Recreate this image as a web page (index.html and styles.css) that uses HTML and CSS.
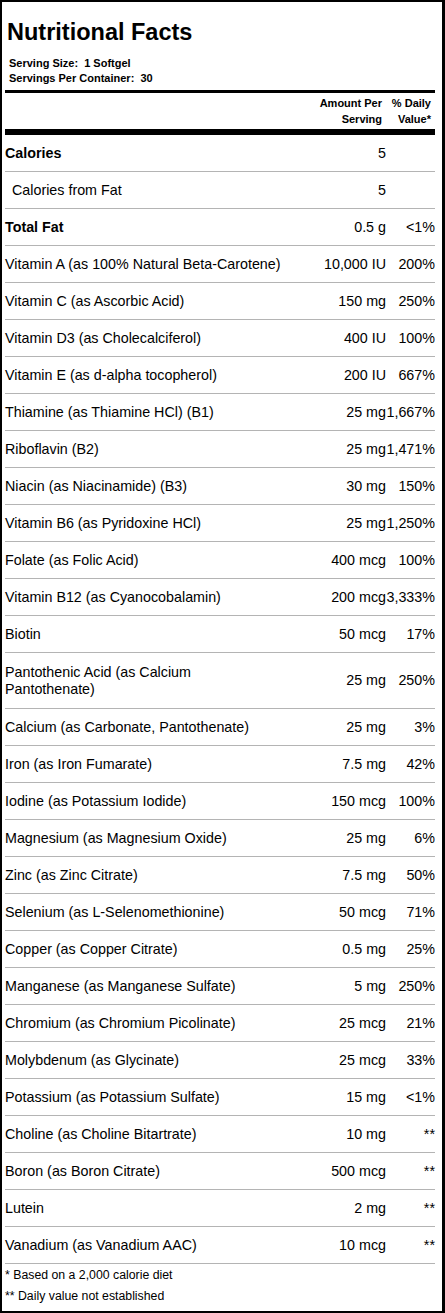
FILE: index.html
```html
<!DOCTYPE html>
<html lang="en">
<head>
  <meta charset="UTF-8">
  <meta name="viewport" content="width=device-width, initial-scale=1.0">
  <title>Nutritional Facts</title>
  <link rel="stylesheet" href="styles.css">
</head>
<body>
  <div class="label">
    <h1 class="label-title">Nutritional Facts</h1>
    <div class="serving">
      <p>Serving Size:&nbsp; 1 Softgel</p>
      <p>Servings Per Container:&nbsp; 30</p>
    </div>
    <div class="rule rule-mid"></div>

    <!-- column headings -->
    <div class="head">
      <span></span>
      <span>Amount Per<br>Serving</span>
      <span>% Daily<br>Value*</span>
    </div>
    <div class="rule rule-thick"></div>

    <div class="row bold"><span class="name">Calories</span><span class="amt">5</span><span class="dv"></span></div>
    <div class="row"><span class="name sub">Calories from Fat</span><span class="amt">5</span><span class="dv"></span></div>
    <div class="row bold"><span class="name">Total Fat</span><span class="amt">0.5 g</span><span class="dv">&lt;1%</span></div>
    <div class="row"><span class="name">Vitamin A (as 100% Natural Beta-Carotene)</span><span class="amt">10,000 IU</span><span class="dv">200%</span></div>
    <div class="row"><span class="name">Vitamin C (as Ascorbic Acid)</span><span class="amt">150 mg</span><span class="dv">250%</span></div>
    <div class="row"><span class="name">Vitamin D3 (as Cholecalciferol)</span><span class="amt">400 IU</span><span class="dv">100%</span></div>
    <div class="row"><span class="name">Vitamin E (as d-alpha tocopherol)</span><span class="amt">200 IU</span><span class="dv">667%</span></div>
    <div class="row"><span class="name">Thiamine (as Thiamine HCl) (B1)</span><span class="amt">25 mg</span><span class="dv">1,667%</span></div>
    <div class="row"><span class="name">Riboflavin (B2)</span><span class="amt">25 mg</span><span class="dv">1,471%</span></div>
    <div class="row"><span class="name">Niacin (as Niacinamide) (B3)</span><span class="amt">30 mg</span><span class="dv">150%</span></div>
    <div class="row"><span class="name">Vitamin B6 (as Pyridoxine HCl)</span><span class="amt">25 mg</span><span class="dv">1,250%</span></div>
    <div class="row"><span class="name">Folate (as Folic Acid)</span><span class="amt">400 mcg</span><span class="dv">100%</span></div>
    <div class="row"><span class="name">Vitamin B12 (as Cyanocobalamin)</span><span class="amt">200 mcg</span><span class="dv">3,333%</span></div>
    <div class="row"><span class="name">Biotin</span><span class="amt">50 mcg</span><span class="dv">17%</span></div>
    <div class="row tall"><span class="name">Pantothenic Acid (as Calcium<br>Pantothenate)</span><span class="amt">25 mg</span><span class="dv">250%</span></div>
    <div class="row"><span class="name">Calcium (as Carbonate, Pantothenate)</span><span class="amt">25 mg</span><span class="dv">3%</span></div>
    <div class="row"><span class="name">Iron (as Iron Fumarate)</span><span class="amt">7.5 mg</span><span class="dv">42%</span></div>
    <div class="row"><span class="name">Iodine (as Potassium Iodide)</span><span class="amt">150 mcg</span><span class="dv">100%</span></div>
    <div class="row"><span class="name">Magnesium (as Magnesium Oxide)</span><span class="amt">25 mg</span><span class="dv">6%</span></div>
    <div class="row"><span class="name">Zinc (as Zinc Citrate)</span><span class="amt">7.5 mg</span><span class="dv">50%</span></div>
    <div class="row"><span class="name">Selenium (as L-Selenomethionine)</span><span class="amt">50 mcg</span><span class="dv">71%</span></div>
    <div class="row"><span class="name">Copper (as Copper Citrate)</span><span class="amt">0.5 mg</span><span class="dv">25%</span></div>
    <div class="row"><span class="name">Manganese (as Manganese Sulfate)</span><span class="amt">5 mg</span><span class="dv">250%</span></div>
    <div class="row"><span class="name">Chromium (as Chromium Picolinate)</span><span class="amt">25 mcg</span><span class="dv">21%</span></div>
    <div class="row"><span class="name">Molybdenum (as Glycinate)</span><span class="amt">25 mcg</span><span class="dv">33%</span></div>
    <div class="row"><span class="name">Potassium (as Potassium Sulfate)</span><span class="amt">15 mg</span><span class="dv">&lt;1%</span></div>
    <div class="row"><span class="name">Choline (as Choline Bitartrate)</span><span class="amt">10 mg</span><span class="dv">**</span></div>
    <div class="row"><span class="name">Boron (as Boron Citrate)</span><span class="amt">500 mcg</span><span class="dv">**</span></div>
    <div class="row"><span class="name">Lutein</span><span class="amt">2 mg</span><span class="dv">**</span></div>
    <div class="row"><span class="name">Vanadium (as Vanadium AAC)</span><span class="amt">10 mcg</span><span class="dv">**</span></div>

    <div class="notes">
      <p>* Based on a 2,000 calorie diet</p>
      <p>** Daily value not established</p>
    </div>
  </div>
</body>
</html>
```

FILE: styles.css
```css
body {
  margin: 0;
  font-family: "Liberation Sans", Arial, sans-serif;
  color: #000;
  background: #fff;
}

.label {
  width: 445px;
  box-sizing: border-box;
  border-style: solid;
  border-color: #000;
  border-width: 2px 3px 3px 2px;
  padding: 0 7px 4px 3px;
}

.label-title {
  margin: 17px 0 11px;
  padding-left: 2px;
  font-size: 23.5px;
  line-height: 26px;
  font-weight: bold;
}

.serving {
  margin-bottom: 4px;
  padding-left: 4px;
}

.serving p {
  margin: 0;
  font-size: 11px;
  line-height: 15px;
  font-weight: bold;
}

.rule {
  background: #000;
}

.rule-mid {
  height: 3px;
}

.rule-thick {
  height: 6px;
}

.head {
  display: grid;
  grid-template-columns: 1fr auto 49px;
  padding: 3px 0 2px;
  font-size: 11px;
  line-height: 15.5px;
  font-weight: bold;
  text-align: right;
}

.head span {
  padding-right: 4px;
}

/* one nutrient per row */
.row {
  display: grid;
  grid-template-columns: 1fr auto 49px;
  align-items: center;
  min-height: 36px;
  border-bottom: 1px solid #b4b4b4;
  font-size: 14.3px;
  line-height: 17px;
}

.row.tall {
  min-height: 55px;
}

.row.bold .name {
  font-weight: bold;
}

.name.sub {
  padding-left: 7px;
}

.amt,
.dv {
  text-align: right;
  white-space: nowrap;
}

.notes {
  padding-top: 1px;
}

.notes p {
  margin: 0;
  font-size: 12.3px;
  line-height: 21px;
}
```
